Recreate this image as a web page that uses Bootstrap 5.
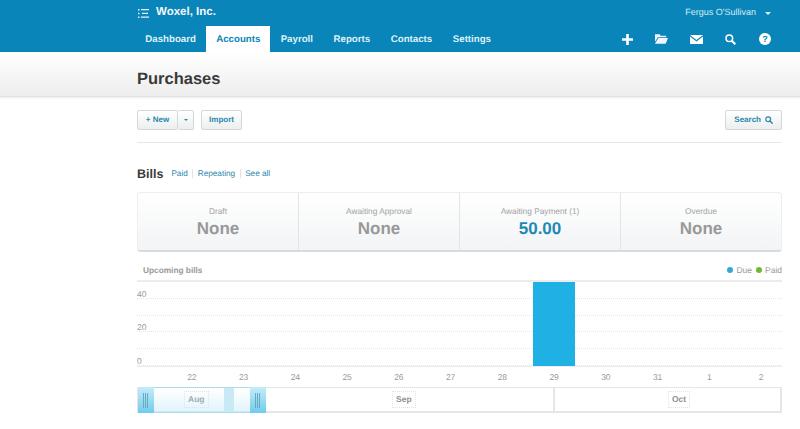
<!DOCTYPE html>
<html lang="en">
<head>
    <meta charset="UTF-8">
    <meta name="viewport" content="width=device-width, initial-scale=1.0">
    <title>Purchases</title>
    <link href="https://cdn.jsdelivr.net/npm/bootstrap@5.3.0/dist/css/bootstrap.min.css" rel="stylesheet">
    <style>
        body {
            font-family: "Liberation Sans", Arial, sans-serif;
            background: #fff;
            color: #333;
            overflow: hidden;
            text-rendering: geometricPrecision;
        }
        a { text-decoration: none; }

        /* Header */
        .top-bar { background: #0a85b9; height: 52px; color: #fff; }
        .top-row { height: 26px; padding: 0 29px 0 138px; }
        .org-name { font-size: 11.5px; font-weight: 700; margin-left: 7px; color: #f2f9fc; }
        .user-name { font-size: 9px; color: #d5ecf6; margin-right: 9px; }
        .caret-down { width: 0; height: 0; border: 3px solid transparent; border-top-color: #e6f4fa; border-bottom: 0; }
        .nav-row { height: 26px; padding: 0 18px 0 135px; }
        .tab-link { font-size: 9.7px; font-weight: 700; color: #dff1f8; padding: 0 10.3px; line-height: 27px; height: 26px; }
        .tab-link.is-active { background: #fff; color: #0a85b9; padding: 0 10px; }
        .icon-slot { width: 34.4px; display: flex; justify-content: center; align-items: center; height: 26px; }

        /* Title */
        .title-band {
            height: 45px;
            padding-left: 137px;
            background: linear-gradient(#fff, #ededed);
            border-bottom: 1px solid #e2e2e2;
            box-shadow: 0 1px 2px rgba(0, 0, 0, .08);
        }
        .title-band h1 { font-size: 16.5px; font-weight: 700; margin: 0; line-height: 55px; color: #3a3a3a; }

        /* Main column */
        .page-body { margin: 0 18px 0 137px; }
        .tool-row { padding-top: 13px; padding-bottom: 12px; border-bottom: 1px solid #e8e8e8; }
        .tool-btn {
            height: 20px;
            display: flex;
            align-items: center;
            font-size: 8px;
            font-weight: 700;
            color: #2b87ad;
            background: linear-gradient(#fff, #ecefef);
            border: 1px solid #d4d8d9;
            border-radius: 2px;
            padding: 0 8px;
        }
        .btn-new { width: 41px; justify-content: center; padding: 0; }
        .btn-split { width: 16px; padding: 0; justify-content: center; border-left: 0; }
        .btn-import { width: 41px; justify-content: center; padding: 0; margin-left: 7px; }
        .caret-btn { width: 0; height: 0; border: 2.5px solid transparent; border-top-color: #2b87ad; border-bottom: 0; }
        .bills-head { margin-top: 21px; height: 20px; }
        .bills-head h2 { font-size: 12.5px; font-weight: 700; margin: 0; color: #3a3a3a; }
        .bill-links { margin-left: 3.500px; font-size: 8.2px; padding-top: 1px; }
        .bill-links a { color: #2b87ad; padding: 0 4.500px; border-right: 1px solid #dfe6e9; }
        .bill-links a:last-child { border-right: 0; }
        .stat-box {
            margin-top: 8px;
            height: 60px;
            border: 1px solid #eceeef;
            border-bottom: 2px solid #d9dcdd;
            border-radius: 4px;
            background: linear-gradient(#fff, #f2f4f5);
        }
        .stat-cell { flex: 1 1 0; text-align: center; border-right: 1px solid #e2e4e5; padding-top: 13px; }
        .stat-cell:last-child { border-right: 0; }
        .stat-label { font-size: 8.3px; color: #a3a3a3; line-height: 11px; }
        .stat-value { font-size: 17px; font-weight: 700; color: #999; line-height: 22px; margin-top: 1px; }
        .stat-value.is-due { color: #1d8ab4; }

        /* Chart */
        .chart-head { margin-top: 12px; height: 12px; font-size: 8.3px; padding-left: 6px; }
        .chart-title { font-weight: 700; color: #999; }
        .legend-text { color: #999; margin-left: 3px; margin-right: 4px; font-size: 8.5px; }
        .legend-text:last-child { margin-right: 0; }
        .dot-due, .dot-paid { width: 6px; height: 6px; border-radius: 50%; }
        .dot-due { background: #36a9d3; }
        .dot-paid { background: #6cb93a; }
        .plot-area { position: relative; margin-top: 4px; height: 87px; border-top: 2px solid #ececec; border-bottom: 1px solid #ececec; }
        .grid-band { height: 16.8px; border-bottom: 1px dotted #e6e6e6; }
        .grid-band:last-child { border-bottom: 0; }
        .axis-num { position: absolute; left: 0; font-size: 8.5px; color: #999; line-height: 10px; }
        .plot-bar { position: absolute; left: 396px; width: 42px; top: 0; bottom: 0; background: #1fb1e3; }
        .tick-row { height: 20px; padding-left: 29px; font-size: 8.5px; color: #999; line-height: 21px; }
        .tick-item { flex: 0 0 51.75px; text-align: center; }

        /* Navigator */
        .nav-strip { position: relative; height: 26px; border: 2px solid #e6e6e6; border-width: 1px 2px 2px 1px; display: flex; }
        .month-part { position: relative; display: flex; align-items: center; font-size: 8.5px; font-weight: 700; color: #929292; }
        .month-part.m-aug { width: 154px; padding-left: 46px; }
        .month-part.m-sep { width: 263px; border-right: 2px solid #e6e6e6; padding-left: 100px; }
        .month-part.m-oct { flex: 1; padding-left: 113px; }
        .month-tag { background: #fff; border: 1px dotted #e2e2e2; padding: 3px; line-height: 9px; position: relative; }
        .range-window {
            position: absolute; left: 0; top: -1px; bottom: -2px; width: 128px;
            border-top: 1px solid #a8dcef; border-bottom: 1px solid #a8dcef;
            background: linear-gradient(rgba(255,255,255,0), rgba(200,235,248,.55));
        }
        .range-hole { position: absolute; left: 86px; width: 10px; top: 0; bottom: 0; background: #c9e9f4; }
        .range-grip {
            position: absolute; top: -1px; bottom: -1px; width: 16px;
            background: linear-gradient(#c6ecf9, #6fcbec);
            display: flex; justify-content: center; align-items: center;
        }
        .grip-left { left: 0; }
        .grip-right { right: 0; }
    </style>
</head>
<body>
<header class="top-bar">
    <div class="top-row d-flex align-items-center justify-content-between">
        <div class="d-flex align-items-center">
            <svg width="11" height="9" viewBox="0 0 11 9" fill="#e6f4fa"><path d="M0 0h1.500v1.500H0zM0 3.700h1.500v1.500H0zM0 7.400h1.500v1.500H0zM3 0h8v1.200H3zM4 3.800h6v1.200H4zM3 7.500h8v1.200H3z"/></svg>
            <span class="org-name">Woxel, Inc.</span>
        </div>
        <div class="d-flex align-items-center">
            <span class="user-name">Fergus O'Sullivan</span>
            <span class="caret-down"></span>
        </div>
    </div>
    <div class="nav-row d-flex justify-content-between">
        <nav class="d-flex">
            <a class="tab-link" href="#">Dashboard</a>
            <a class="tab-link is-active" href="#">Accounts</a>
            <a class="tab-link" href="#">Payroll</a>
            <a class="tab-link" href="#">Reports</a>
            <a class="tab-link" href="#">Contacts</a>
            <a class="tab-link" href="#">Settings</a>
        </nav>
        <div class="d-flex">
            <span class="icon-slot"><svg width="11" height="11" viewBox="0 0 11 11" fill="#fff"><path d="M4.200 0h2.600v4.200H11v2.600H6.800V11H4.200V6.800H0V4.200h4.200z"/></svg></span>
            <span class="icon-slot"><svg width="13" height="10" viewBox="0 0 14 10" fill="#eef8fc"><path d="M0 0h5l1 1.500h6V3H3L0 8zM3.500 4H14l-2.500 6H0z"/></svg></span>
            <span class="icon-slot"><svg width="13" height="9" viewBox="0 0 13 9" fill="#fff"><path d="M0 0h13L6.500 5zM0 1.500l6.500 5 6.500-5V9H0z"/></svg></span>
            <span class="icon-slot"><svg width="11" height="11" viewBox="0 0 11 11" fill="none" stroke="#fff"><circle cx="4.300" cy="4.300" r="3.300" stroke-width="1.500"/><path d="M6.800 6.800 10.300 10.300" stroke-width="2"/></svg></span>
            <span class="icon-slot"><svg width="12" height="12" viewBox="0 0 12 12"><circle cx="6" cy="6" r="6" fill="#fff"/><text x="6" y="9.300" text-anchor="middle" font-size="9" font-weight="700" font-family="Liberation Sans" fill="#0a85b9">?</text></svg></span>
        </div>
    </div>
</header>

<div class="title-band"><h1>Purchases</h1></div>

<main class="page-body">
    <div class="tool-row d-flex justify-content-between">
        <div class="d-flex">
            <a class="tool-btn btn-new" href="#">+ New</a>
            <a class="tool-btn btn-split" href="#"><span class="caret-btn"></span></a>
            <a class="tool-btn btn-import" href="#">Import</a>
        </div>
        <a class="tool-btn" href="#">Search
            <svg class="ms-1" width="8" height="8" viewBox="0 0 8 8" fill="none" stroke="#2b87ad"><circle cx="3.200" cy="3.200" r="2.400" stroke-width="1.200"/><path d="M5 5 7.600 7.600" stroke-width="1.500"/></svg>
        </a>
    </div>

    <div class="bills-head d-flex align-items-center">
        <h2>Bills</h2>
        <div class="bill-links">
            <a href="#">Paid</a><a href="#">Repeating</a><a href="#">See all</a>
        </div>
    </div>

    <div class="stat-box d-flex">
        <div class="stat-cell"><div class="stat-label">Draft</div><div class="stat-value">None</div></div>
        <div class="stat-cell"><div class="stat-label">Awaiting Approval</div><div class="stat-value">None</div></div>
        <div class="stat-cell"><div class="stat-label">Awaiting Payment (1)</div><div class="stat-value is-due">50.00</div></div>
        <div class="stat-cell"><div class="stat-label">Overdue</div><div class="stat-value">None</div></div>
    </div>

    <div class="chart-head d-flex justify-content-between align-items-center">
        <span class="chart-title">Upcoming bills</span>
        <span class="d-flex align-items-center">
            <span class="dot-due"></span><span class="legend-text">Due</span>
            <span class="dot-paid"></span><span class="legend-text">Paid</span>
        </span>
    </div>

    <div class="plot-area">
        <div class="grid-band"></div>
        <div class="grid-band"></div>
        <div class="grid-band"></div>
        <div class="grid-band"></div>
        <div class="grid-band"></div>
        <span class="axis-num" style="top:7px">40</span>
        <span class="axis-num" style="top:40px">20</span>
        <span class="axis-num" style="top:74px">0</span>
        <div class="plot-bar"></div>
    </div>

    <div class="tick-row d-flex">
        <span class="tick-item">22</span><span class="tick-item">23</span><span class="tick-item">24</span>
        <span class="tick-item">25</span><span class="tick-item">26</span><span class="tick-item">27</span>
        <span class="tick-item">28</span><span class="tick-item">29</span><span class="tick-item">30</span>
        <span class="tick-item">31</span><span class="tick-item">1</span><span class="tick-item">2</span>
    </div>

    <div class="nav-strip">
        <div class="month-part m-aug"><span class="month-tag">Aug</span></div>
        <div class="month-part m-sep"><span class="month-tag">Sep</span></div>
        <div class="month-part m-oct"><span class="month-tag">Oct</span></div>
        <div class="range-window">
            <span class="range-hole"></span>
            <span class="range-grip grip-left"><svg width="6" height="15" stroke="#6aa9c2" stroke-width="1"><path d="M.5 0v15M2.500 0v15M4.500 0v15"/></svg></span>
            <span class="range-grip grip-right"><svg width="6" height="15" stroke="#6aa9c2" stroke-width="1"><path d="M.5 0v15M2.500 0v15M4.500 0v15"/></svg></span>
        </div>
    </div>
</main>
<script src="https://cdn.jsdelivr.net/npm/bootstrap@5.3.0/dist/js/bootstrap.bundle.min.js"></script>
</body>
</html>
